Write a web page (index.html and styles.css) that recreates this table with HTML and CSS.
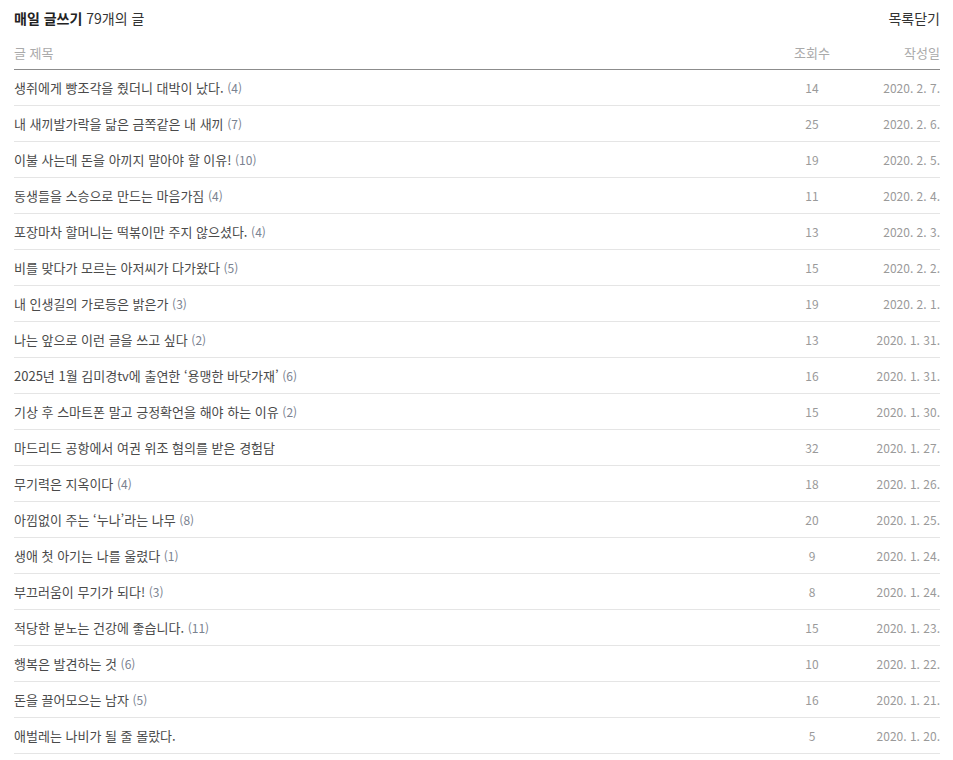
FILE: index.html
```
<!DOCTYPE html>
<html lang="ko">
<head>
<meta charset="utf-8">
<link rel="stylesheet" href="styles.css">
</head>
<body>
<div class="wrap">
  <div class="top">
    <div class="title"><b>매일 글쓰기</b> 79개의 글</div>
    <a class="close">목록닫기</a>
  </div>
  <div class="row head">
    <div class="c-title">글 제목</div>
    <div class="c-views">조회수</div>
    <div class="c-date">작성일</div>
  </div>
  <div class="row"><div class="c-title">생쥐에게 빵조각을 줬더니 대박이 났다. <span class="cnt">(4)</span></div><div class="c-views">14</div><div class="c-date">2020. 2. 7.</div></div>
  <div class="row"><div class="c-title">내 새끼발가락을 닮은 금쪽같은 내 새끼 <span class="cnt">(7)</span></div><div class="c-views">25</div><div class="c-date">2020. 2. 6.</div></div>
  <div class="row"><div class="c-title">이불 사는데 돈을 아끼지 말아야 할 이유! <span class="cnt">(10)</span></div><div class="c-views">19</div><div class="c-date">2020. 2. 5.</div></div>
  <div class="row"><div class="c-title">동생들을 스승으로 만드는 마음가짐 <span class="cnt">(4)</span></div><div class="c-views">11</div><div class="c-date">2020. 2. 4.</div></div>
  <div class="row"><div class="c-title">포장마차 할머니는 떡볶이만 주지 않으셨다. <span class="cnt">(4)</span></div><div class="c-views">13</div><div class="c-date">2020. 2. 3.</div></div>
  <div class="row"><div class="c-title">비를 맞다가 모르는 아저씨가 다가왔다 <span class="cnt">(5)</span></div><div class="c-views">15</div><div class="c-date">2020. 2. 2.</div></div>
  <div class="row"><div class="c-title">내 인생길의 가로등은 밝은가 <span class="cnt">(3)</span></div><div class="c-views">19</div><div class="c-date">2020. 2. 1.</div></div>
  <div class="row"><div class="c-title">나는 앞으로 이런 글을 쓰고 싶다 <span class="cnt">(2)</span></div><div class="c-views">13</div><div class="c-date">2020. 1. 31.</div></div>
  <div class="row"><div class="c-title">2025년 1월 김미경tv에 출연한 ‘용맹한 바닷가재’ <span class="cnt">(6)</span></div><div class="c-views">16</div><div class="c-date">2020. 1. 31.</div></div>
  <div class="row"><div class="c-title">기상 후 스마트폰 말고 긍정확언을 해야 하는 이유 <span class="cnt">(2)</span></div><div class="c-views">15</div><div class="c-date">2020. 1. 30.</div></div>
  <div class="row"><div class="c-title">마드리드 공항에서 여권 위조 혐의를 받은 경험담</div><div class="c-views">32</div><div class="c-date">2020. 1. 27.</div></div>
  <div class="row"><div class="c-title">무기력은 지옥이다 <span class="cnt">(4)</span></div><div class="c-views">18</div><div class="c-date">2020. 1. 26.</div></div>
  <div class="row"><div class="c-title">아낌없이 주는 ‘누나’라는 나무 <span class="cnt">(8)</span></div><div class="c-views">20</div><div class="c-date">2020. 1. 25.</div></div>
  <div class="row"><div class="c-title">생애 첫 아기는 나를 울렸다 <span class="cnt">(1)</span></div><div class="c-views">9</div><div class="c-date">2020. 1. 24.</div></div>
  <div class="row"><div class="c-title">부끄러움이 무기가 되다! <span class="cnt">(3)</span></div><div class="c-views">8</div><div class="c-date">2020. 1. 24.</div></div>
  <div class="row"><div class="c-title">적당한 분노는 건강에 좋습니다. <span class="cnt">(11)</span></div><div class="c-views">15</div><div class="c-date">2020. 1. 23.</div></div>
  <div class="row"><div class="c-title">행복은 발견하는 것 <span class="cnt">(6)</span></div><div class="c-views">10</div><div class="c-date">2020. 1. 22.</div></div>
  <div class="row"><div class="c-title">돈을 끌어모으는 남자 <span class="cnt">(5)</span></div><div class="c-views">16</div><div class="c-date">2020. 1. 21.</div></div>
  <div class="row"><div class="c-title">애벌레는 나비가 될 줄 몰랐다.</div><div class="c-views">5</div><div class="c-date">2020. 1. 20.</div></div>
</div>
</body>
</html>
```
FILE: styles.css
```
* { box-sizing: border-box; }
body {
  margin: 0;
  background: #fff;
  font-family: "Noto Sans CJK KR", "Noto Sans", sans-serif;
  font-size: 13px;
  color: #333;
}
.wrap {
  padding: 0 13px 0 14px;
}
.top {
  height: 36px;
  display: flex;
  align-items: center;
  justify-content: space-between;
  font-size: 14px;
  color: #333;
}
.title b { font-weight: 700; color: #222; }
.close { color: #333; }
.row {
  display: flex;
  align-items: center;
  height: 36px;
  border-bottom: 1px solid #e5e5e5;
  color: #4a4a4a;
}
.row.head {
  height: 34px;
  border-bottom: 1px solid #8c8c8c;
  color: #aaa;
}
.c-title { flex: 1; }
.c-views { width: 60px; text-align: center; color: #9a9a9a; font-size: 12px; }
.c-date { width: 98px; text-align: right; color: #9a9a9a; font-size: 12px; }
.head .c-views, .head .c-date { color: #aaa; font-size: 13px; }
.cnt { color: #7a8290; font-size: 12px; }
```
